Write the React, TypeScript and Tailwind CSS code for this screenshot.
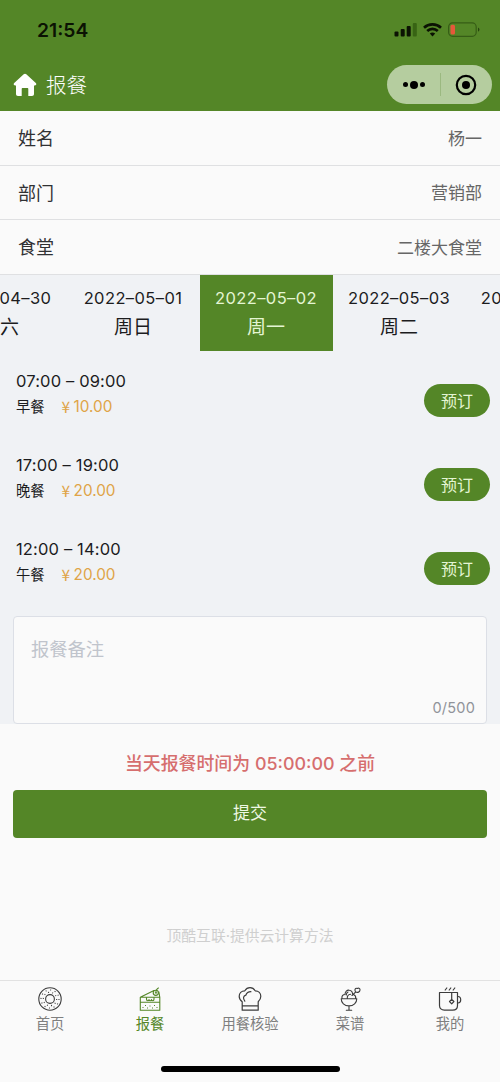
import { useState } from "react";

interface InfoRow {
  label: string
  value: string
}

interface DayItem {
  date: string
  week: string
}

interface Meal {
  mealId: number
  time: string
  name: string
  price: string
}

const infoRows: InfoRow[] = [
  { label: "姓名", value: "杨一" },
  { label: "部门", value: "营销部" },
  { label: "食堂", value: "二楼大食堂" },
];

const days: DayItem[] = [
  { date: "2022–04–30", week: "周六" },
  { date: "2022–05–01", week: "周日" },
  { date: "2022–05–02", week: "周一" },
  { date: "2022–05–03", week: "周二" },
  { date: "2022–05–04", week: "周三" },
];

const meals: Meal[] = [
  { mealId: 1, time: "07:00 – 09:00", name: "早餐", price: "10.00" },
  { mealId: 2, time: "17:00 – 19:00", name: "晚餐", price: "20.00" },
  { mealId: 3, time: "12:00 – 14:00", name: "午餐", price: "20.00" },
];

const DonutIcon = () => (
  <svg width="24" height="24" viewBox="0 0 24 24" fill="none" stroke="currentColor" strokeWidth="1.1">
    <circle cx="12" cy="12" r="11.2" />
    <circle cx="12" cy="12" r="4.4" />
    <circle cx="12" cy="12" r="6.7" strokeDasharray="1 3.2" />
    <circle cx="12" cy="12" r="9" strokeDasharray="1 3.7" />
  </svg>
);

const CakeIcon = () => (
  <svg width="24" height="24" viewBox="0 0 24 24" fill="none" stroke="currentColor" strokeWidth="1.1" strokeLinejoin="round">
    <path d="M2.3 10.300h19.500v13H2.300zM2.300 10.300 16 3.500M20.800 4.500l1 5.800M2.300 15.300h19.500" />
    <path d="M8.500 10.300v2c0 1.800 2.500 1.800 2.500.3 0 1.600 2.500 1.600 2.500 0 0 1.500 2.500 1.500 2.500-.3v-2" />
    <circle cx="17.800" cy="5.800" r="2.600" />
    <path d="M17.800 6c0-2.600 1-4.300 3-5.300M17 5.500c.8.8 1.500.8 2.100 0" />
    <path d="M4.500 20.500h1M7 18.500h1M9 21h1M11.500 19h1M14 21h1M16 18.500h1M18.500 20.500h1" />
  </svg>
);

const ChefHatIcon = () => (
  <svg width="24" height="24" viewBox="0 0 24 24" fill="none" stroke="currentColor" strokeWidth="1.2" strokeLinejoin="round" strokeLinecap="round">
    <path d="M4.200 23.200V14.700C2.300 13.300 1.200 11.500 1.200 9.200c0-3 2.200-5.400 5.600-5.400C8 1.800 9.800.7 12 .7s4 1.100 5.200 3.100c3.400 0 5.600 2.400 5.600 5.400 0 2.300-1 4.100-2.600 5.500v8.500zM4.200 18.800h16" />
    <path d="M6.800 14.200C4.700 11.500 5.300 8.900 7.800 8.200 8.600 6 10.400 4.800 12.900 4.700" />
  </svg>
);

const SundaeIcon = () => (
  <svg width="24" height="24" viewBox="0 0 24 24" fill="none" stroke="currentColor" strokeWidth="1.100" strokeLinejoin="round" strokeLinecap="round">
    <path d="M3.200 11.700h15.600c0 4-3.200 7.200-7.800 7.200s-7.800-3.200-7.800-7.200zM11 18.900v4.300M8.300 23.300h5.400" />
    <path d="M4 11.500c-.5-2.300.8-4 3-4C7 4.700 9 2.800 11.300 3.200c2 .3 3.200 1.800 3.300 3.800M17.700 11.500c.3-1.800-.7-3.300-2.300-4M9.300 11.500c-.2-2.400 1.200-4 3.300-4.200M8.300 8c0-1.400.6-2.500 1.700-3" />
    <path d="M14 8.500 17.800 4.800M17.600 5C16.200 2.600 17.400.6 19.300 1.500 20.700.4 22.400 1.700 21.900 3.300c0 1.700-2.200 2.600-4.300 1.700z" />
  </svg>
);

const TeaIcon = () => (
  <svg width="24" height="24" viewBox="0 0 24 24" fill="none" stroke="currentColor" strokeWidth="1.2" strokeLinejoin="round" strokeLinecap="round">
    <path d="M1.500 5.500h18v13c0 2.800-2 4.700-4.800 4.700H6.300c-2.800 0-4.800-1.900-4.800-4.700z" />
    <path d="M19.500 9.500h.5c1.700 0 2.700 1.400 2.700 3.300S21.700 16 20 16h-.5M13.700 5.500v7M13.700 12.300l2.200 2.200-2.200 2.300-2.200-2.300z" />
    <path d="m7.200 3 1.600-2M11.200 3l1.600-2M15.200 3l1.600-2" />
  </svg>
);

const tabs = [
  { name: "首页", icon: <DonutIcon /> },
  { name: "报餐", icon: <CakeIcon /> },
  { name: "用餐核验", icon: <ChefHatIcon /> },
  { name: "菜谱", icon: <SundaeIcon /> },
  { name: "我的", icon: <TeaIcon /> },
];

const StatusIcons = () => (
  <svg width="87" height="18" viewBox="0 0 87 18">
    <g fill="#0b1203">
      <rect x="0.500" y="10.500" width="4" height="5" rx="1" />
      <rect x="6.700" y="8" width="4" height="7.500" rx="1" />
      <rect x="12.700" y="5" width="4" height="10.500" rx="1" />
      <rect x="18.800" y="2" width="4" height="13.500" rx="1" fill="#386414" />
    </g>
    <g fill="none" stroke="#0b1203" strokeWidth="2.600">
      <path d="M30 6.700c4.700-4.500 12.300-4.500 17 0" />
      <path d="M33.200 10c3-2.900 7.600-2.900 10.600 0" />
    </g>
    <path d="M38.500 15.500 35.800 12.600c1.600-1.400 3.800-1.400 5.400 0z" fill="#0b1203" />
    <rect x="54.600" y="1.900" width="27.600" height="13.400" rx="4" fill="none" stroke="#365d16" strokeWidth="1.200" />
    <rect x="56.500" y="3.700" width="4.500" height="9.800" rx="1.500" fill="#e5583a" />
    <path d="M84 6.500c2 .8 2 3.400 0 4.200z" fill="#27440f" />
  </svg>
);

const App = () => {
  const [activeDay, setActiveDay] = useState("2022–05–02");
  const [activeTab, setActiveTab] = useState("报餐");
  const [remark, setRemark] = useState("");

  return (
    <main className="w-[500px] h-[1082px] flex flex-col overflow-hidden bg-[#fafafa] font-['Inter','Noto_Sans_CJK_SC',sans-serif] text-[#1c1c1e]">
      {/* Header */}
      <header className="h-[111px] shrink-0 bg-[#548627]">
        <div className="h-[60px] pl-[37px] pr-[19px] flex items-center justify-between">
          <span className="pt-[2px] text-[19.3px] leading-none font-semibold text-[#0b1203]">21:54</span>
          <StatusIcons />
        </div>
        <div className="h-[49px] pl-[13px] pr-[8px] flex items-center">
          <svg width="24" height="24" viewBox="0 0 24 24" fill="#fff">
            <path d="M10.700 1.200c.8-.7 1.800-.7 2.600 0l9.500 8.900c1 .9.600 2.300-.8 2.300h-1v8.600c0 1.200-.8 2-2 2h-3.700v-7c0-.7-.4-1-1-1H9.700c-.6 0-1 .3-1 1v7H5c-1.200 0-2-.8-2-2v-8.600H2c-1.400 0-1.800-1.400-.8-2.300z" />
          </svg>
          <h1 className="ml-[9px] pt-[3px] flex-1 text-[20.5px] leading-none font-light text-white">报餐</h1>
          <div className="w-[105px] h-[39px] rounded-full bg-[#b5cd9f] flex items-center">
            <div className="flex-1 h-full flex items-center justify-center gap-[2px] pl-[2px]">
              <span className="w-[5px] h-[5px] rounded-full bg-black" />
              <span className="w-[8px] h-[8px] rounded-full bg-black" />
              <span className="w-[5px] h-[5px] rounded-full bg-black" />
            </div>
            <div className="w-px h-[23px] bg-[#9bb980]" />
            <div className="flex-1 flex justify-center pr-[1px]">
              <svg width="22" height="22" viewBox="0 0 22 22">
                <circle cx="11" cy="11" r="9.200" fill="none" stroke="#000" strokeWidth="2.200" />
                <circle cx="11" cy="11" r="4" />
              </svg>
            </div>
          </div>
        </div>
      </header>

      {/* User info */}
      <section className="shrink-0">
        {infoRows.map((row) => (
          <div key={row.label} className="h-[54.600px] pt-[3px] px-[18px] flex items-center justify-between border-b border-[#dfe0e2]">
            <span className="text-[18px] leading-none text-[#303133]">{row.label}</span>
            <span className="text-[17px] leading-none text-[#666]">{row.value}</span>
          </div>
        ))}
      </section>

      <section className="h-[449px] shrink-0 flex flex-col bg-[#f0f2f5]">
        {/* Days */}
        <div className="h-[76px] shrink-0 -ml-[66.500px] flex">
          {days.map((day) => (
            <button
              key={day.date}
              className={`w-[133px] shrink-0 flex flex-col items-center pt-[12px] cursor-pointer ${
                activeDay === day.date ? "bg-[#548627] text-[#e4f5d3]" : "text-[#1c1c1e]"
              }`}
              onClick={() => setActiveDay(day.date)}
            >
              <span className="text-[16.500px] leading-[22px] tracking-[0.400px] whitespace-nowrap">{day.date}</span>
              <span className="pt-[2px] text-[19px] leading-[34px]">{day.week}</span>
            </button>
          ))}
        </div>

        {/* Meals */}
        <div className="pt-[8px]">
          {meals.map((meal) => (
            <div key={meal.mealId} className="h-[84px] pl-[16px] pr-[10px] flex items-center justify-between">
              <div className="-mt-[14px]">
                <div className="text-[16.500px] leading-[26px] tracking-[0.150px]">{meal.time}</div>
                <div className="flex items-center leading-[25px]">
                  <span className="text-[14.300px]">{meal.name}</span>
                  <span className="ml-[17px] w-[12px] font-['Noto_Sans_CJK_SC',sans-serif] text-[15.500px] text-[#dfa447]">¥</span>
                  <span className="text-[15.300px] text-[#dfa447]">{meal.price}</span>
                </div>
              </div>
              <button className="w-[66px] h-[33px] rounded-full bg-[#548627] text-[#e4f5d3] text-[16px] leading-none cursor-pointer">
                预订
              </button>
            </div>
          ))}
        </div>

        {/* Remark */}
        <div className="mt-[5px] mx-[13px] h-[108px] shrink-0 flex flex-col rounded-[4px] border border-[#dcdfe6] bg-[#fafafa] px-[11px] pb-[5px]">
          <textarea
            className="flex-1 w-full resize-none outline-none bg-transparent pl-[6px] pt-[19px] text-[18.300px] leading-[26px] placeholder:text-[#c0c4cc]"
            placeholder="报餐备注"
            maxLength={500}
            value={remark}
            onChange={(e) => setRemark(e.target.value)}
          />
          <span className="text-right text-[14.500px] leading-[20px] tracking-[0.200px] text-[#909399]">{remark.length}/500</span>
        </div>
      </section>

      {/* Submit */}
      <section className="flex-1 px-[13px] flex flex-col">
        <p className="h-[66px] pt-[14px] text-center text-[17.900px] leading-[52px] font-medium text-[#d66e6e]">
          当天报餐时间为 05:00:00 之前
        </p>
        <button className="h-[48px] rounded-[4px] bg-[#548627] text-[#eef8e4] text-[17px] leading-none cursor-pointer">
          提交
        </button>
        <p className="mt-[87px] text-center text-[14.800px] leading-[22px] text-[#cfcfcf]">顶酷互联·提供云计算方法</p>
      </section>

      {/* Tab bar */}
      <nav className="h-[102px] shrink-0 border-t border-[#e2e2e2] flex flex-col">
        <div className="flex">
          {tabs.map((tab) => (
            <button
              key={tab.name}
              className={`flex-1 pt-[6px] flex flex-col items-center cursor-pointer ${
                activeTab === tab.name ? "text-[#548627]" : "text-[#3c3c3c]"
              }`}
              onClick={() => setActiveTab(tab.name)}
            >
              {tab.icon}
              <span className={`pt-[1px] text-[14.300px] leading-[24px] ${activeTab === tab.name ? "" : "text-[#7f7f7f]"}`}>
                {tab.name}
              </span>
            </button>
          ))}
        </div>
        <div className="mt-auto mb-[10px] mx-auto w-[179px] h-[6px] rounded-full bg-black" />
      </nav>
    </main>
  );
};

export default App;
